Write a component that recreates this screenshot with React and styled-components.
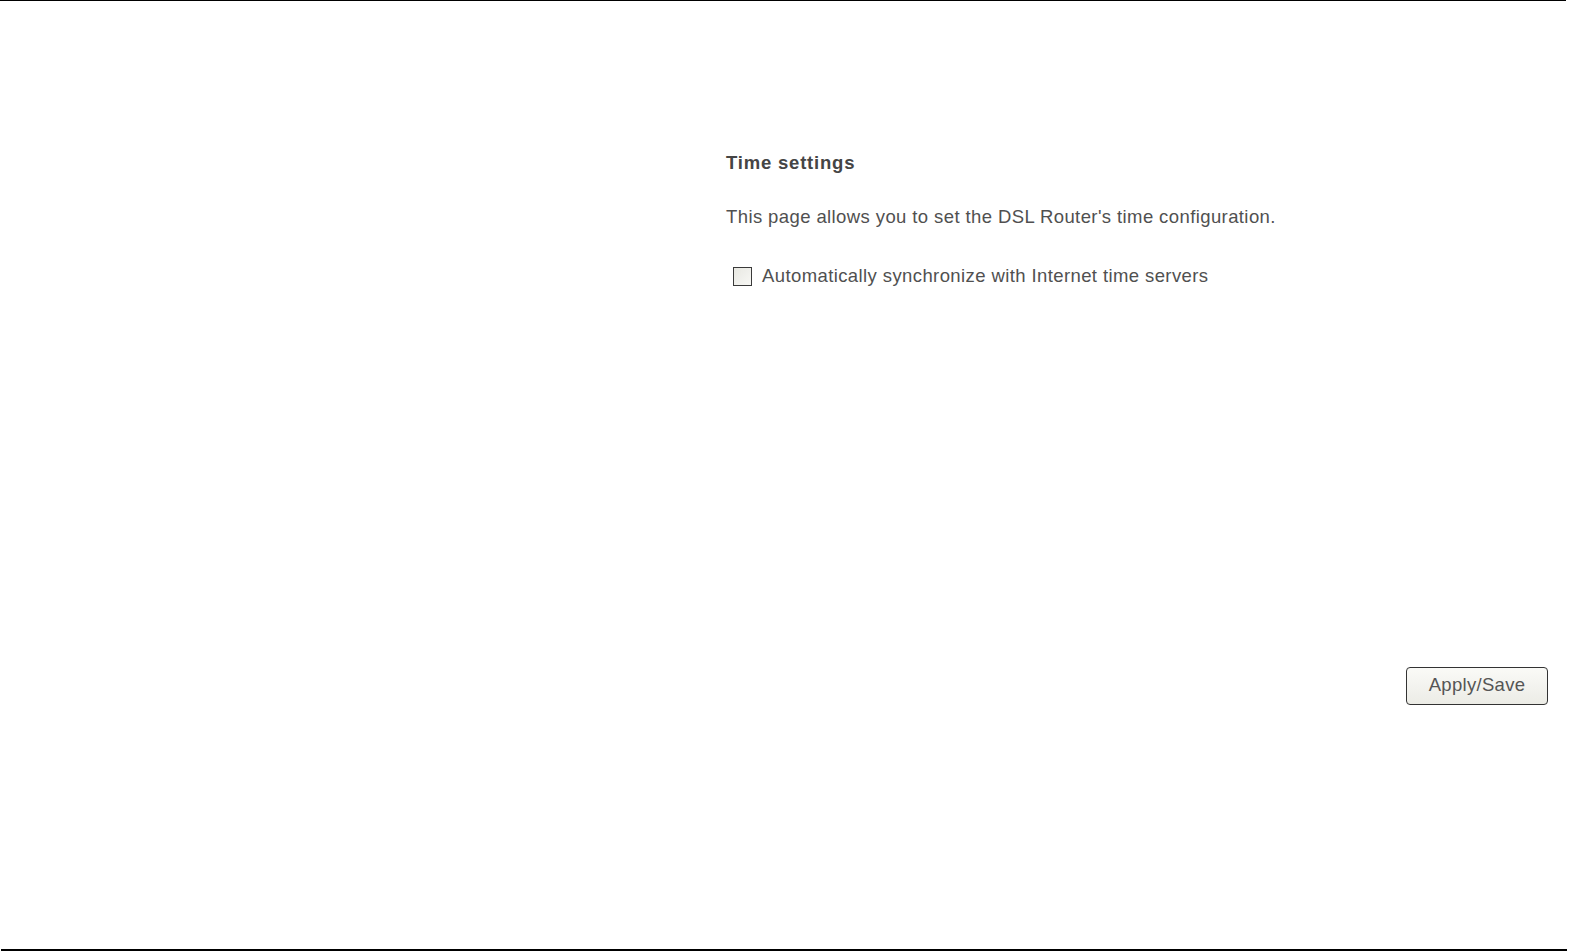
import React from "react";
import styled, { createGlobalStyle } from "styled-components";

const Global = createGlobalStyle`
  html, body { margin: 0; padding: 0; background: #fff; }
  body { font-family: "Liberation Sans", Arial, sans-serif; }
`;

const Page = styled.div`
  width: 1569px;
  height: 952px;
  box-sizing: border-box;
  display: flex;
  flex-direction: column;
`;

const TopRule = styled.div`
  height: 1px;
  width: 1566px;
  background: #000;
`;

const BottomRule = styled.div`
  height: 2px;
  width: 1566px;
  margin-left: 1px;
  margin-bottom: 1px;
  background: #000;
`;

const Main = styled.div`
  flex: 1;
  display: flex;
  flex-direction: column;
  padding-left: 726px;
  padding-right: 21px;
  padding-top: 150px;
  color: #505050;
  font-size: 18.5px;
  letter-spacing: 0.4px;
`;

const Title = styled.h1`
  margin: 0;
  font-size: 18.5px;
  font-weight: bold;
  line-height: 24px;
  letter-spacing: 0.8px;
  color: #454545;
`;

const Text = styled.p`
  margin: 30px 0 0;
  line-height: 24px;
`;

const CheckRow = styled.label`
  display: flex;
  align-items: center;
  gap: 10px;
  margin-top: 35px;
  margin-left: 7px;
  line-height: 24px;
`;

const Box = styled.span`
  width: 17px;
  height: 17px;
  border: 1px solid #3a3a3a;
  background: linear-gradient(135deg, #e8e8e2 0%, #f7f7f4 100%);
  box-sizing: content-box;
`;

const ButtonRow = styled.div`
  display: flex;
  justify-content: flex-end;
  margin-top: 379px;
`;

const Button = styled.button`
  width: 142px;
  height: 38px;
  border: 1.5px solid #333;
  border-radius: 4px;
  background: linear-gradient(#fafaf7, #ececE6);
  color: #555;
  font-family: "Liberation Sans", Arial, sans-serif;
  font-size: 18.5px;
  letter-spacing: 0.3px;
  padding: 0 0 2px;
`;

export default function App() {
  return (
    <Page>
      <Global />
      <TopRule />
      <Main>
        <Title>Time settings</Title>
        <Text>This page allows you to set the DSL Router's time configuration.</Text>
        <CheckRow>
          <Box />
          <span>Automatically synchronize with Internet time servers</span>
        </CheckRow>
        <ButtonRow>
          <Button>Apply/Save</Button>
        </ButtonRow>
      </Main>
      <BottomRule />
    </Page>
  );
}
